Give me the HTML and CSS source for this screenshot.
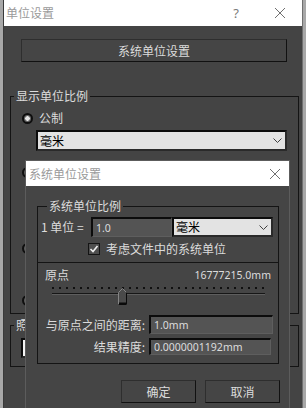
FILE: index.html
```html
<!DOCTYPE html>
<html lang="zh-CN">
<head>
<meta charset="utf-8">
<title>单位设置</title>
<link rel="stylesheet" href="styles.css">
</head>
<body>
<div class="desk">
  <div class="win outer">
    <div class="titlebar">
      <span class="title">单位设置</span>
      <span class="help">?</span>
      <svg class="close" width="10" height="10" viewBox="0 0 10 10"><path d="M0 0L10 10M10 0L0 10"/></svg>
    </div>
    <div class="body">
      <div class="btn wide">系统单位设置</div>
      <fieldset class="group g1">
        <legend>显示单位比例</legend>
        <div class="radio-row r1"><span class="radio on"></span><span>公制</span></div>
        <div class="combo c1"><span>毫米</span><svg class="chev" width="9" height="5" viewBox="0 0 9 5"><path d="M0.5 0.5L4.5 4.5L8.5 0.5"/></svg></div>
        <div class="radio-row r2"><span class="radio"></span></div>
        <div class="radio-row r3"><span class="radio"></span></div>
        <div class="radio-row r4"><span class="radio"></span></div>
      </fieldset>
      <fieldset class="group g2">
        <legend>照</legend>
        <div class="combo c2"></div>
      </fieldset>
    </div>
  </div>

  <div class="win inner">
    <div class="titlebar">
      <span class="title">系统单位设置</span>
      <svg class="close" width="10" height="10" viewBox="0 0 10 10"><path d="M0 0L10 10M10 0L0 10"/></svg>
    </div>
    <div class="body">
      <fieldset class="group g3">
        <legend>系统单位比例</legend>
        <div class="sec1">
          <div class="unit-row">
            <span class="unit-label">1 单位 =</span>
            <div class="input in1"><span class="num">1.0</span></div>
            <div class="combo c3"><span>毫米</span><svg class="chev" width="9" height="5" viewBox="0 0 9 5"><path d="M0.5 0.5L4.5 4.5L8.5 0.5"/></svg></div>
          </div>
          <div class="chk-row">
            <span class="chk"><svg width="10" height="10" viewBox="0 0 10 10"><path d="M1.5 5L4 7.5L8.5 2"/></svg></span>
            <span>考虑文件中的系统单位</span>
          </div>
        </div>
        <div class="sec2">
          <div class="origin-row"><span>原点</span><span class="num">16777215.0mm</span></div>
          <div class="slider">
            <div class="dots"></div>
            <div class="track"></div>
            <svg class="thumb" width="9" height="17" viewBox="0 0 9 17">
              <polygon points="0.5,4.5 4.5,0.5 8.5,4.5 8.5,16.5 0.5,16.5" fill="#4a4a4a" stroke="#858585"/>
              <path d="M8.5 4.5V16.5H0.5" fill="none" stroke="#0a0a0a" stroke-width="1"/>
              <path d="M1 15.5H8" stroke="#0a0a0a" stroke-width="2"/>
            </svg>
          </div>
          <div class="field-row">
            <span class="flabel">与原点之间的距离:</span>
            <div class="input in2"><span class="num">1.0mm</span></div>
          </div>
          <div class="field-row r-prec">
            <span class="flabel">结果精度:</span>
            <div class="input in3"><span class="num">0.0000001192mm</span></div>
          </div>
        </div>
      </fieldset>
      <div class="actions">
        <div class="btn act">确定</div>
        <div class="btn act">取消</div>
      </div>
    </div>
  </div>
</div>
</body>
</html>
```

FILE: styles.css
```css
html, body {
  margin: 0;
  padding: 0;
}
body {
  font-family: "Noto Sans CJK SC", "Noto Sans", sans-serif;
  font-size: 12px;
  color: #dcdcdc;
}
.desk {
  position: relative;
  width: 306px;
  height: 408px;
  overflow: hidden;
  background: #a8a8a8;
}
.win {
  box-sizing: border-box;
  background: #444444;
}
.outer {
  margin-left: 3px;
  width: 300px;
  height: 408px;
  border-left: 1px solid #3a3a3a;
  border-right: 1px solid #707070;
}
.titlebar {
  display: flex;
  align-items: center;
  height: 26px;
  background: #ffffff;
}
.title {
  color: #9a9a9a;
  line-height: 14px;
}
.outer .title {
  padding-left: 2px;
}
.help {
  margin-left: auto;
  width: 12px;
  text-align: center;
  color: #7a7a7a;
  font-family: "Noto Sans", sans-serif;
  font-size: 13px;
  line-height: 14px;
}
.close {
  display: block;
  stroke: #707070;
  stroke-width: 1;
  fill: none;
}
.outer .close {
  margin-left: 33px;
  margin-right: 17px;
}
.outer .body {
  padding-top: 13px;
}
.btn {
  box-sizing: border-box;
  display: flex;
  align-items: center;
  justify-content: center;
  height: 23px;
  background: #454545;
  border: 1px solid #2e2e2e;
  border-right-color: #111;
  border-bottom-color: #111;
  color: #dcdcdc;
  line-height: 14px;
}
.wide {
  margin-left: 17px;
  width: 266px;
}
.group {
  box-sizing: border-box;
  margin: 0;
  padding: 0;
  border: 1px solid #141414;
  min-width: 0;
}
.group legend {
  padding: 0 2px;
  line-height: 14px;
  color: #dcdcdc;
}
.g1 {
  margin: 27px 0 0 6px;
  width: 289px;
  padding-bottom: 5px;
}
.g1 legend, .g2 legend {
  margin-left: 3px;
}
.radio-row {
  display: flex;
  align-items: center;
  height: 16px;
  padding-left: 11px;
  line-height: 14px;
}
.radio {
  box-sizing: border-box;
  width: 11px;
  height: 11px;
  border-radius: 50%;
  border: 2px solid #0e0e0e;
  background: #5a5a5a;
  margin-right: 6px;
}
.radio.on {
  background: radial-gradient(circle, #e6e6e6 0 2px, #6a6a6a 2.5px);
}
.r1 { margin-top: 7px; }
.r2 { margin-top: 13px; }
.r3 { margin-top: 60px; }
.r4 { margin-top: 36px; }
.combo {
  box-sizing: border-box;
  display: flex;
  align-items: center;
  background: #e3e3e3;
  border: 2px solid #0c0c0c;
  border-right-color: #2a2a2a;
  border-bottom-color: #2a2a2a;
  color: #000;
  padding-left: 2px;
  line-height: 14px;
}
.chev {
  margin-left: auto;
  margin-right: 3px;
  stroke: #404040;
  stroke-width: 1;
  fill: none;
}
.c1 {
  margin: 4px 0 0 25px;
  width: 251px;
  height: 21px;
}
.g2 {
  margin: 4px 0 0 6px;
  width: 289px;
  padding-bottom: 8px;
}
.c2 {
  margin: 6px 0 0 10px;
  width: 150px;
  height: 20px;
  background: #f4f4f4;
}

/* inner dialog, a window lying over the first one */
.inner {
  position: absolute;
  left: 25px;
  top: 160px;
  width: 265px;
  bottom: 0;
  border: 1px solid #5c5c5c;
  border-bottom: 0;
  background: #454545;
}
.inner .titlebar {
  height: 25px;
}
.inner .title {
  padding-left: 3px;
}
.inner .close {
  margin-left: auto;
  margin-right: 9px;
}
.inner .body {
  padding-top: 13px;
}
.g3 {
  margin-left: 11px;
  width: 242px;
}
.g3 legend {
  margin-left: 9px;
}
.num {
  font-family: "Noto Sans", sans-serif;
  font-size: 10.5px;
  line-height: 14px;
  color: #dcdcdc;
}
.sec1 {
  padding: 4px 0 6px 3px;
}
.unit-row {
  display: flex;
  height: 20px;
}
.unit-label {
  width: 50px;
  line-height: 20px;
}
.input {
  box-sizing: border-box;
  display: flex;
  align-items: center;
  background: #545454;
  border: 2px solid #0c0c0c;
  border-right: 1px solid #5e5e5e;
  border-bottom: 1px solid #5e5e5e;
  padding-left: 3px;
}
.in1 {
  width: 81px;
  height: 20px;
}
.c3 {
  width: 101px;
  height: 20px;
}
.chk-row {
  display: flex;
  align-items: center;
  height: 14px;
  margin-top: 5px;
  padding-left: 47px;
  line-height: 14px;
}
.chk {
  box-sizing: border-box;
  display: flex;
  align-items: center;
  justify-content: center;
  width: 12px;
  height: 12px;
  border: 1px solid #141414;
  background: #4e4e4e;
  margin-right: 6px;
}
.chk svg {
  stroke: #f0f0f0;
  stroke-width: 1.6;
  fill: none;
}
.sec2 {
  border-top: 1px solid #141414;
  padding: 5px 4px 8px 3px;
}
.origin-row {
  display: flex;
  justify-content: space-between;
  align-items: center;
  height: 14px;
  padding: 0 3px 0 4px;
  line-height: 14px;
}
.slider {
  position: relative;
  margin: 4px 0 0 11px;
  width: 215px;
  height: 18px;
}
.dots {
  margin-top: 5px;
  height: 2px;
  background-image: linear-gradient(to right, #101010 2px, transparent 2px);
  background-size: 7px 2px;
}
.track {
  margin-top: 4px;
  width: 213px;
  height: 0;
  border-top: 1px solid #161616;
  border-bottom: 1px solid #5e5e5e;
}
.thumb {
  position: absolute;
  left: 66px;
  top: 1px;
}
.field-row {
  display: grid;
  grid-template-columns: 104px 124px;
  column-gap: 4px;
  margin-top: 10px;
  line-height: 14px;
}
.flabel {
  text-align: right;
  align-self: center;
}
.in2 {
  height: 19px;
}
.r-prec {
  margin-top: 4px;
}
.in3 {
  height: 17px;
  width: 122px;
}
.actions {
  display: flex;
  justify-content: flex-end;
  gap: 9px;
  margin-top: 16px;
  padding-right: 9px;
}
.act {
  width: 75px;
}
```
